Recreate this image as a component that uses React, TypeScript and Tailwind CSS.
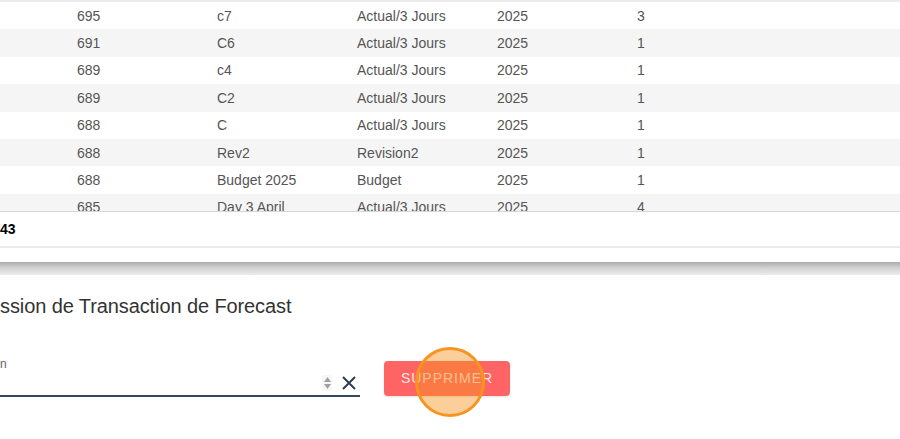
import React from "react";

const rows = [
  ["695", "c7", "Actual/3 Jours", "2025", "3"],
  ["691", "C6", "Actual/3 Jours", "2025", "1"],
  ["689", "c4", "Actual/3 Jours", "2025", "1"],
  ["689", "C2", "Actual/3 Jours", "2025", "1"],
  ["688", "C", "Actual/3 Jours", "2025", "1"],
  ["688", "Rev2", "Revision2", "2025", "1"],
  ["688", "Budget 2025", "Budget", "2025", "1"],
  ["685", "Day 3 April", "Actual/3 Jours", "2025", "4"],
];

export default function App() {
  return (
    <div
      className="w-[900px] h-[439px] bg-white overflow-hidden"
      style={{ fontFamily: '"Liberation Sans", Arial, sans-serif' }}
    >
      {/* Table card */}
      <div className="border-t-[2px] border-[#ececec]">
        <div className="h-[209px] overflow-hidden">
          {rows.map((r, i) => (
            <div
              key={i}
              className={`h-[27.4px] flex items-center pl-[77px] text-[14px] text-[#555] ${
                i % 2 === 1 ? "bg-[#f5f5f5]" : "bg-white"
              }`}
            >
              {r.map((c, j) => (
                <div key={j} className="w-[140px] shrink-0 whitespace-nowrap leading-[16px]">
                  {c}
                </div>
              ))}
            </div>
          ))}
        </div>
        <div className="h-[1px] bg-[#d6d6d6]" />
        <div className="h-[34px] flex items-center text-[14px] font-bold text-black">43</div>
        <div className="h-[2px] bg-[#ebebeb]" />
        <div className="h-[14px] bg-white" />
        <div className="h-[13px] bg-gradient-to-b from-[#adadad] via-[#d4d4d4] to-[#ececec]" />
      </div>

      {/* Form section */}
      <div className="pt-[19px]">
        <div className="text-[20px] leading-[24px] text-[#333] whitespace-nowrap tracking-[-0.1px]">
          ssion de Transaction de Forecast
        </div>
        <div className="mt-[39px] flex items-end gap-[24px]">
          <div className="w-[360px]">
            <div className="text-[12px] leading-[14px] text-[#666]">n</div>
            <div className="h-[26px] flex items-center justify-end border-b-[2px] border-[#34495e]">
              <div className="flex flex-col items-center justify-center gap-[2px] w-[10px] h-[16px] bg-[#f7f7f7] mr-[10px]">
                <svg width="7" height="5" viewBox="0 0 7 5">
                  <path d="M3.5 0 L7 5 L0 5 Z" fill="#a0a0a0" />
                </svg>
                <svg width="7" height="5" viewBox="0 0 7 5">
                  <path d="M0 0 L7 0 L3.5 5 Z" fill="#a0a0a0" />
                </svg>
              </div>
              <svg width="14" height="14" viewBox="0 0 14 14" className="mr-[4px]">
                <path d="M1 1 L13 13 M13 1 L1 13" stroke="#2c3e50" strokeWidth="2" strokeLinecap="butt" />
              </svg>
            </div>
          </div>
          <div className="relative mb-[1px]">
            <button className="w-[126px] h-[35px] rounded-[4px] bg-[#ff6464] text-[14px] tracking-[1px] text-[#ffe4e4] shadow-[0_1px_2px_rgba(0,0,0,0.12)]">
              SUPPRIMER
            </button>
            <div className="absolute left-[31px] top-[-14px] w-[70px] h-[70px] rounded-full border-[3px] border-[#f7931e] bg-[rgba(247,147,30,0.45)] pointer-events-none" />
          </div>
        </div>
      </div>
    </div>
  );
}
